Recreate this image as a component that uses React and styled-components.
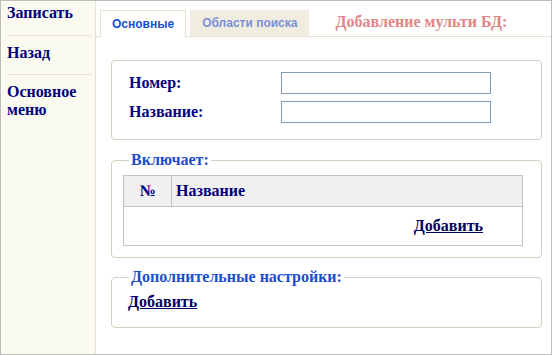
import React from 'react'
import styled, { createGlobalStyle } from 'styled-components'

const Global = createGlobalStyle`
  html, body { margin: 0; padding: 0; background: #fff; }
  * { box-sizing: border-box; }
`

const Page = styled.div`
  width: 552px;
  height: 355px;
  border: 1px solid #bdbdbd;
  display: flex;
  font-family: "Liberation Serif", "Times New Roman", serif;
  overflow: hidden;
`

const Sidebar = styled.div`
  width: 95px;
  flex: none;
  background: #fbfaf0;
  border-right: 1px solid #e6e2cf;
  padding: 0 4px 0 6px;
`

const NavItem = styled.a`
  display: block;
  color: #000080;
  font-weight: bold;
  font-size: 16px;
  line-height: 18px;
  text-decoration: none;
  padding: ${p => (p.first ? '3px 0 13px' : '8px 0 12px')};
  border-bottom: ${p => (p.last ? 'none' : '1px solid #e6e2cf')};
`

const Main = styled.div`
  flex: 1;
  display: flex;
  flex-direction: column;
`

const TabBar = styled.div`
  display: flex;
  align-items: flex-end;
  height: 36px;
  padding: 9px 0 0 4px;
  border-bottom: 1px solid #e6e2cf;
`

const Tab = styled.div`
  margin-right: 4px;
  margin-bottom: ${p => (p.active ? '-1px' : '0')};
  padding: ${p => (p.active ? '0 11px' : '0 12px')};
  display: flex;
  align-items: center;
  font-family: "Liberation Sans", Arial, sans-serif;
  font-weight: bold;
  font-size: 12px;
  color: ${p => (p.active ? '#1450d2' : '#7b90d8')};
  background: ${p => (p.active ? '#fff' : '#f0ede0')};
  border: ${p => (p.active ? '1px solid #e6e2cf' : 'none')};
  border-bottom: none;
  height: ${p => (p.active ? '27px' : '26px')};
`

const Title = styled.div`
  align-self: center;
  margin-left: 22px;
  margin-top: -3px;
  font-weight: bold;
  font-size: 16px;
  color: #e08686;
`

const Content = styled.div`
  padding: 23px 9px 0 15px;
`

const Box = styled.fieldset`
  margin: 0 0 ${p => p.gap || 0}px;
  padding: ${p => p.pad};
  border: 1px solid #d2d1bf;
  border-radius: 4px;
  min-width: 0;
`

const Legend = styled.legend`
  padding: 0 2px;
  margin-left: 1px;
  color: #1a4ed0;
  font-weight: bold;
  font-size: 16px;
  line-height: 18px;
`

const FormRow = styled.div`
  display: flex;
  align-items: center;
  height: 22px;
  margin-bottom: ${p => (p.last ? 0 : 7)}px;
`

const Label = styled.label`
  width: 153px;
  padding-left: 1px;
  color: #000080;
  font-weight: bold;
  font-size: 16px;
`

const Input = styled.input`
  width: 210px;
  height: 22px;
  border: 1px solid #7f9db9;
  background: #fff;
  padding: 0 3px;
  outline: none;
`

const Table = styled.table`
  width: 400px;
  border-collapse: collapse;
  border: 1px solid #c3c3c3;
  margin-top: 6px;
  margin-left: -5px;
`

const Th = styled.th`
  height: 31px;
  background: #f0f0f0;
  border: 1px solid #c3c3c3;
  color: #000080;
  font-size: 16px;
  font-weight: bold;
  text-align: ${p => p.align || 'left'};
  width: ${p => (p.w ? p.w + 'px' : 'auto')};
  padding: 0 4px;
`

const Td = styled.td`
  height: 39px;
  text-align: right;
  padding: 0 39px 0 0;
`

const Link = styled.a`
  color: #000060;
  font-weight: bold;
  font-size: 16px;
  text-decoration: underline;
  cursor: pointer;
`

const Plain = styled.div`
  padding-top: 7px;
  line-height: 18px;
`

export default function App() {
  return (
    <>
      <Global />
      <Page>
        <Sidebar>
          <NavItem first>Записать</NavItem>
          <NavItem>Назад</NavItem>
          <NavItem last>Основное<br />меню</NavItem>
        </Sidebar>
        <Main>
          <TabBar>
            <Tab active>Основные</Tab>
            <Tab>Области поиска</Tab>
            <Title>Добавление мульти БД:</Title>
          </TabBar>
          <Content>
            <Box gap={11} pad="11px 16px 16px">
              <FormRow>
                <Label>Номер:</Label>
                <Input />
              </FormRow>
              <FormRow last>
                <Label>Название:</Label>
                <Input />
              </FormRow>
            </Box>
            <Box gap={10} pad="0 16px 11px">
              <Legend>Включает:</Legend>
              <Table>
                <thead>
                  <tr>
                    <Th w={48} align="center">№</Th>
                    <Th>Название</Th>
                  </tr>
                </thead>
                <tbody>
                  <tr>
                    <Td colSpan={2}><Link>Добавить</Link></Td>
                  </tr>
                </tbody>
              </Table>
            </Box>
            <Box pad="0 16px 16px">
              <Legend>Дополнительные настройки:</Legend>
              <Plain><Link>Добавить</Link></Plain>
            </Box>
          </Content>
        </Main>
      </Page>
    </>
  )
}
